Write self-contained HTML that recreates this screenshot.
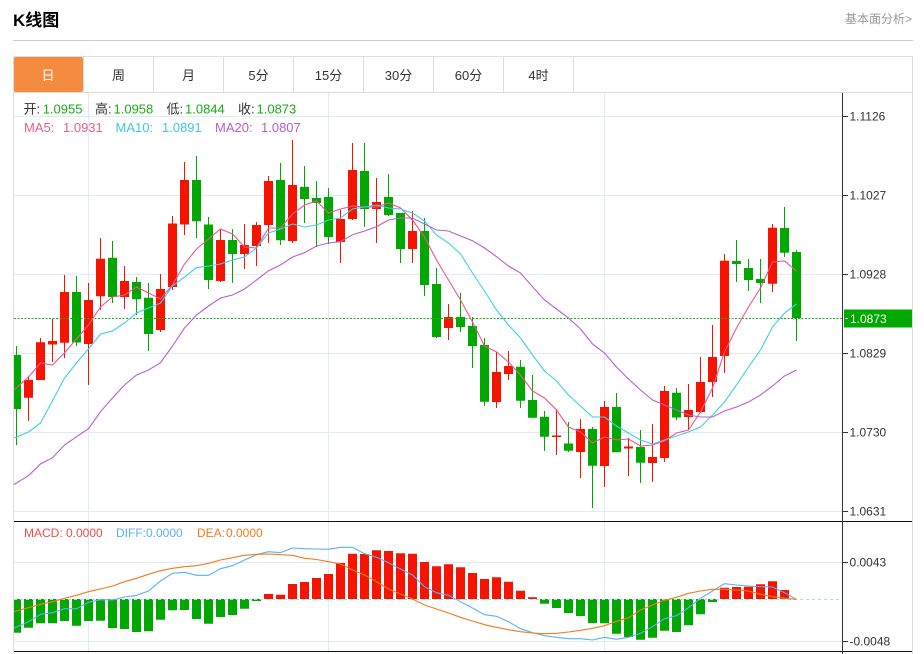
<!DOCTYPE html>
<html><head><meta charset="utf-8"><style>
html,body{margin:0;padding:0;background:#fff}
svg{display:block;position:absolute;left:0;top:0}
text{font-family:"Liberation Sans","Noto Sans CJK SC",sans-serif}
</style></head><body>
<svg width="924" height="654" viewBox="0 0 924 654" xmlns="http://www.w3.org/2000/svg">
<rect width="924" height="654" fill="#fff"/>
<text x="13" y="26" font-size="17" font-weight="700" fill="#000">K线图</text>
<text x="845" y="23" font-size="12" fill="#999">基本面分析&gt;</text>
<path d="M13 40.5H913" stroke="#ccc" fill="none"/>
<!-- tabs -->
<path d="M13.5 56.5H912.5V654M13.5 56.5V654M13 92.5H913" stroke="#ddd" fill="none"/>
<path d="M83.5 57V92M153.5 57V92M223.5 57V92M293.5 57V92M363.5 57V92M433.5 57V92M503.5 57V92M573.5 57V92" stroke="#ddd" fill="none"/>
<rect x="14" y="57" width="69" height="35" rx="2" fill="#f58b3f"/>
<g font-size="13" fill="#333" text-anchor="middle">
<text x="48" y="80" fill="#fff">日</text><text x="118.500" y="80">周</text><text x="188.500" y="80">月</text><text x="258.500" y="80">5分</text><text x="328.500" y="80">15分</text><text x="398.500" y="80">30分</text><text x="468.500" y="80">60分</text><text x="538.500" y="80">4时</text>
</g>
<!-- grid -->
<path d="M14 116.500H842M14 195.500H842M14 274.500H842M14 353.500H842M14 432.500H842M14 511.500H842M14 562.500H842M14 641.500H842M88.500 93V652M328.500 93V652M604.500 93V652" stroke="#e2ebf3" fill="none"/>
<!-- candles -->
<path stroke="#f61400" fill="none" d="M28.500 376V421M40.500 338V380M52.500 319V362M64.500 275V358M88.500 283V385M100.500 238V310M124.500 266V309M160.500 274V332M172.500 216V290M184.500 162V235M220.500 229V282M244.500 224V269M256.500 222V266M268.500 176V243M292.500 140V243M340.500 210V263M352.500 143V220M376.500 178V243M412.500 211V263M448.500 304V340M496.500 352V408M508.500 351V380M556.500 409V455M580.500 419V478M604.500 401V487M628.500 438V476M652.500 424V482M664.500 386V462M688.500 384V430M700.500 357V413M712.500 325V397M724.500 254V373M772.500 224V292"/>
<path stroke="#02a802" fill="none" d="M16.500 346V445M76.500 276V346M112.500 241V303M136.500 277V315M148.500 283V351M196.500 156V238M208.500 217V289M232.500 229V283M280.500 163V245M304.500 166V223M316.500 181V247M328.500 188V244M364.500 143V227M388.500 174V216M400.500 213V263M424.500 218V296M436.500 268V338M460.500 293V332M472.500 317V368M484.500 338V406M520.500 360V408M532.500 375V418M544.500 411V451M568.500 422V452M592.500 427V508M616.500 393V452M640.500 430V483M676.500 388V420M736.500 240V282M748.500 259V291M760.500 259V303M784.500 207V257M796.500 250V341"/>
<path fill="#f61400" d="M24 380h9V397.700h-9zM36 342.300h9V380h-9zM48 341h9V344.500h-9zM60 292h9V342.700h-9zM84 300h9V344h-9zM96 258.700h9V296.300h-9zM120 281h9V297h-9zM156 289h9V330h-9zM168 223.500h9V287h-9zM180 180h9V224.500h-9zM216 240h9V281h-9zM240 245h9V254h-9zM252 225h9V246h-9zM264 181h9V225h-9zM288 185h9V241h-9zM336 219h9V242h-9zM348 170h9V219h-9zM372 202h9V209h-9zM408 231h9V249h-9zM444 317h9V328h-9zM492 372h9V402h-9zM504 366h9V374h-9zM552 435.500h9V437h-9zM576 429h9V452h-9zM600 407h9V466h-9zM624 446.500h9V448.500h-9zM648 457h9V463h-9zM660 391h9V458h-9zM684 410h9V417h-9zM696 382h9V412h-9zM708 357h9V382h-9zM720 260.700h9V356h-9zM768 227.700h9V283.700h-9z"/>
<path fill="#02a802" d="M14 355h7V409h-7zM72 292h9V342.500h-9zM108 257.700h9V297h-9zM132 282h9V299.300h-9zM144 297.700h9V334h-9zM192 180h9V221.300h-9zM204 224.500h9V280h-9zM228 240h9V254h-9zM276 180h9V240.300h-9zM300 187h9V199h-9zM312 198h9V203h-9zM324 197h9V237h-9zM360 171h9V209h-9zM384 197h9V215h-9zM396 213h9V249h-9zM420 231h9V285h-9zM432 284h9V337h-9zM456 317h9V327h-9zM468 326h9V346h-9zM480 345h9V401.700h-9zM516 366.700h9V400.700h-9zM528 400h9V417.700h-9zM540 416.700h9V436.700h-9zM564 443.500h9V450.700h-9zM588 429h9V465.700h-9zM612 407h9V452.300h-9zM636 447h9V462.700h-9zM672 392.700h9V417.500h-9zM732 261h9V264h-9zM744 268h9V280h-9zM756 279h9V283h-9zM780 228h9V252.700h-9zM792 252h9V318h-9z"/>
<path d="M14 318.500H842" stroke="#18b018" stroke-dasharray="2 1.500" fill="none"/>
<!-- MA lines -->
<g fill="none" stroke-width="1.100">
<polyline stroke="#f0558c" points="14,390 28.500,377 40.500,363 52.500,365 64.500,352.700 76.500,339 88.500,325 100.500,307 112.500,297 124.500,295 136.500,287 148.500,293 160.500,299 172.500,285 184.500,264 196.500,249 208.500,239 220.500,229 232.500,234 244.500,247 256.500,248 268.500,228 280.500,228 292.500,214 304.500,205 316.500,201 328.500,213 340.500,209 352.500,206 364.500,207 376.500,207 388.500,203 400.500,208 412.500,220 424.500,237 436.500,260 448.500,280 460.500,300 472.500,322 484.500,346 496.500,352 508.500,362 520.500,375 532.500,391 544.500,398 556.500,410 568.500,427 580.500,432 592.500,443 604.500,437 616.500,440 628.500,439 640.500,446 652.500,445 664.500,441 676.500,433 688.500,430 700.500,412 712.500,388 724.500,352 736.500,328 748.500,307 760.500,288 772.500,262 784.500,261 796.500,271"/>
<polyline stroke="#40cfe6" points="14,438 28.500,432 40.500,423 52.500,400.700 64.500,378 76.500,363 88.500,349 100.500,334 112.500,331 124.500,323 136.500,313 148.500,308 160.500,303 172.500,286 184.500,277 196.500,267.700 208.500,266 220.500,264 232.500,260 244.500,257 256.500,248 268.500,233 280.500,229 292.500,224 304.500,227 316.500,225 328.500,220 340.500,218 352.500,209 364.500,207 376.500,205 388.500,208 400.500,209 412.500,213 424.500,221 436.500,235 448.500,243 460.500,254 472.500,273 484.500,291 496.500,310 508.500,325 520.500,338 532.500,355 544.500,371 556.500,381 568.500,395 580.500,406 592.500,417 604.500,417 616.500,426 628.500,433 640.500,440 652.500,444 664.500,440 676.500,436 688.500,432 700.500,427 712.500,415 724.500,402 736.500,385 748.500,367 760.500,350 772.500,327 784.500,313 796.500,304"/>
<polyline stroke="#b860cc" points="14,484.500 28.500,475.700 40.500,464 52.500,457.700 64.500,445 76.500,436.700 88.500,428.700 100.500,411.700 112.500,398 124.500,385 136.500,375 148.500,370 160.500,362.700 172.500,346 184.500,328 196.500,315 208.500,306 220.500,298 232.500,295 244.500,289 256.500,280 268.500,270.700 280.500,265 292.500,257 304.500,252.700 316.500,246 328.500,243 340.500,241.700 352.500,234.700 364.500,231 376.500,226.700 388.500,220 400.500,218 412.500,218 424.500,224 436.500,230 448.500,231 460.500,236 472.500,240.700 484.500,248 496.500,256.700 508.500,266 520.500,273 532.500,286.700 544.500,300 556.500,309 568.500,318 580.500,329 592.500,344 604.500,353 616.500,367 628.500,379 640.500,390 652.500,400 664.500,405 676.500,410 688.500,415 700.500,417 712.500,417 724.500,411 736.500,407 748.500,402 760.500,395 772.500,386 784.500,376 796.500,370"/>
</g>
<!-- info -->
<g font-size="13">
<g fill="#333"><text x="23.500" y="113.500">开:</text><text x="95" y="113.500">高:</text><text x="166.500" y="113.500">低:</text><text x="238" y="113.500">收:</text></g>
<g fill="#1aab1a"><text x="42.700" y="113.500">1.0955</text><text x="113.500" y="113.500">1.0958</text><text x="185" y="113.500">1.0844</text><text x="256.500" y="113.500">1.0873</text></g>
<g fill="#ec5a8e"><text x="24" y="132">MA5:</text><text x="63" y="132">1.0931</text></g>
<g fill="#40c8e0"><text x="115.500" y="132">MA10:</text><text x="162" y="132">1.0891</text></g>
<g fill="#b860cc"><text x="215" y="132">MA20:</text><text x="261" y="132">1.0807</text></g>
</g>
<!-- MACD bars -->
<path fill="#02a802" d="M14 599h7V632.700h-7zM24 599h9V627.700h-9zM36 599h9V623.300h-9zM48 599h9V623.300h-9zM60 599h9V621h-9zM72 599h9V625.700h-9zM84 599h9V621h-9zM96 599h9V620.700h-9zM108 599h9V628h-9zM120 599h9V629h-9zM132 599h9V632h-9zM144 599h9V631.300h-9zM156 599h9V619.700h-9zM168 599h9V610.300h-9zM180 599h9V610h-9zM192 599h9V619h-9zM204 599h9V623.700h-9zM216 599h9V617h-9zM228 599h9V615h-9zM240 599h9V608.700h-9zM252 599h9V601h-9zM540 599h9V603.700h-9zM552 599h9V608h-9zM564 599h9V613h-9zM576 599h9V616h-9zM588 599h9V623h-9zM600 599h9V623.300h-9zM612 599h9V633.700h-9zM624 599h9V637h-9zM636 599h9V639.700h-9zM648 599h9V637.700h-9zM660 599h9V630.700h-9zM672 599h9V632h-9zM684 599h9V625.300h-9zM696 599h9V614.300h-9zM708 599h9V602h-9z"/>
<path fill="#f61400" d="M264 594h9V599h-9zM276 594.700h9V599h-9zM288 584h9V599h-9zM300 582h9V599h-9zM312 578h9V599h-9zM324 574h9V599h-9zM336 563h9V599h-9zM348 553.700h9V599h-9zM360 554h9V599h-9zM372 550.300h9V599h-9zM384 551h9V599h-9zM396 553.300h9V599h-9zM408 553.700h9V599h-9zM420 562h9V599h-9zM432 566.300h9V599h-9zM444 564.300h9V599h-9zM456 567.300h9V599h-9zM468 573h9V599h-9zM480 579h9V599h-9zM492 577.300h9V599h-9zM504 581.700h9V599h-9zM516 590.700h9V599h-9zM528 597.300h9V599h-9zM720 587.700h9V599h-9zM732 587h9V599h-9zM744 586.700h9V599h-9zM756 584.300h9V599h-9zM768 581.300h9V599h-9zM780 590h9V599h-9z"/>
<path d="M14 599.500H840" stroke="#a8dcf0" stroke-dasharray="3 3" fill="none"/>
<g fill="none" stroke-width="1.100">
<polyline stroke="#5ab0f5" points="14,628.300 28.500,621.700 40.500,614.300 52.500,612.700 64.500,608.700 76.500,608.700 88.500,602.300 100.500,599.700 112.500,600 124.500,597 136.500,595.300 148.500,591 160.500,581 172.500,573.300 184.500,572.300 196.500,575.300 208.500,575.300 220.500,568.700 232.500,565.700 244.500,560 256.500,554.700 268.500,551.700 280.500,552.700 292.500,548 304.500,548.700 316.500,549 328.500,549.300 340.500,547.300 352.500,547.300 364.500,553.700 376.500,557.300 388.500,562.700 400.500,569 412.500,575 424.500,586.700 436.500,592.700 448.500,595.300 460.500,601.700 472.500,608 484.500,614.700 496.500,616.300 508.500,621.700 520.500,628.700 532.500,632.700 544.500,635.700 556.500,637.300 568.500,638.700 580.500,638.700 592.500,640 604.500,637.300 616.500,639.300 628.500,637.300 640.500,633.300 652.500,626.700 664.500,618.700 676.500,615.700 688.500,607.700 700.500,598.300 712.500,591 724.500,583.700 736.500,585 748.500,586 760.500,586.700 772.500,587 784.500,592.700 796.500,599.300"/>
<polyline stroke="#f37b1d" points="14,611.700 28.500,607.700 40.500,604.300 52.500,601.700 64.500,598.300 76.500,595.300 88.500,591.700 100.500,589 112.500,586 124.500,581.700 136.500,578.300 148.500,574.300 160.500,570.700 172.500,568.300 184.500,566.700 196.500,565.700 208.500,563.300 220.500,560 232.500,557.700 244.500,555.300 256.500,554.300 268.500,554 280.500,554.700 292.500,555.300 304.500,558.300 316.500,559.500 328.500,561.700 340.500,564 352.500,570 364.500,575 376.500,581.700 388.500,589 400.500,594 412.500,599 424.500,605 436.500,609 448.500,613 460.500,617.300 472.500,621 484.500,624.700 496.500,627.300 508.500,629.700 520.500,631.700 532.500,633 544.500,633.700 556.500,633.300 568.500,632 580.500,630.300 592.500,628.300 604.500,625.700 616.500,621.300 628.500,617.700 640.500,610 652.500,605 664.500,600.300 676.500,597.300 688.500,593.300 700.500,591 712.500,589.300 724.500,589.300 736.500,590 748.500,591 760.500,594.300 772.500,596.700 784.500,598.300 796.500,599.300"/>
</g>
<g font-size="12">
<g fill="#f04b4b"><text x="24" y="537">MACD:</text><text x="66" y="537">0.0000</text></g>
<g fill="#5ab0f5"><text x="116" y="537">DIFF:</text><text x="146" y="537">0.0000</text></g>
<g fill="#f37b1d"><text x="197" y="537">DEA:</text><text x="226" y="537">0.0000</text></g>
</g>
<!-- axes -->
<path d="M14 521.500H912M14 651.500H912" stroke="#111" fill="none"/>
<path d="M842.500 93V654" stroke="#333" fill="none"/>
<path d="M843 116.500h5M843 195.500h5M843 274.500h5M843 353.500h5M843 432.500h5M843 511.500h5M843 562.500h5M843 641.500h5" stroke="#333" fill="none"/>
<g font-size="12" fill="#333">
<text x="849.500" y="120.500">1.1126</text><text x="849.500" y="199.500">1.1027</text><text x="849.500" y="278.500">1.0928</text><text x="849.500" y="357.500">1.0829</text><text x="849.500" y="436.500">1.0730</text><text x="849.500" y="515.500">1.0631</text><text x="849.500" y="566.500">0.0043</text><text x="849.500" y="645.500">-0.0048</text>
</g>
<rect x="844" y="309.500" width="68" height="18" fill="#02a802"/>
<path d="M845 318.500h3" stroke="#fff" fill="none"/>
<text x="850" y="323" font-size="12" fill="#fff">1.0873</text>
</svg>
</body></html>
